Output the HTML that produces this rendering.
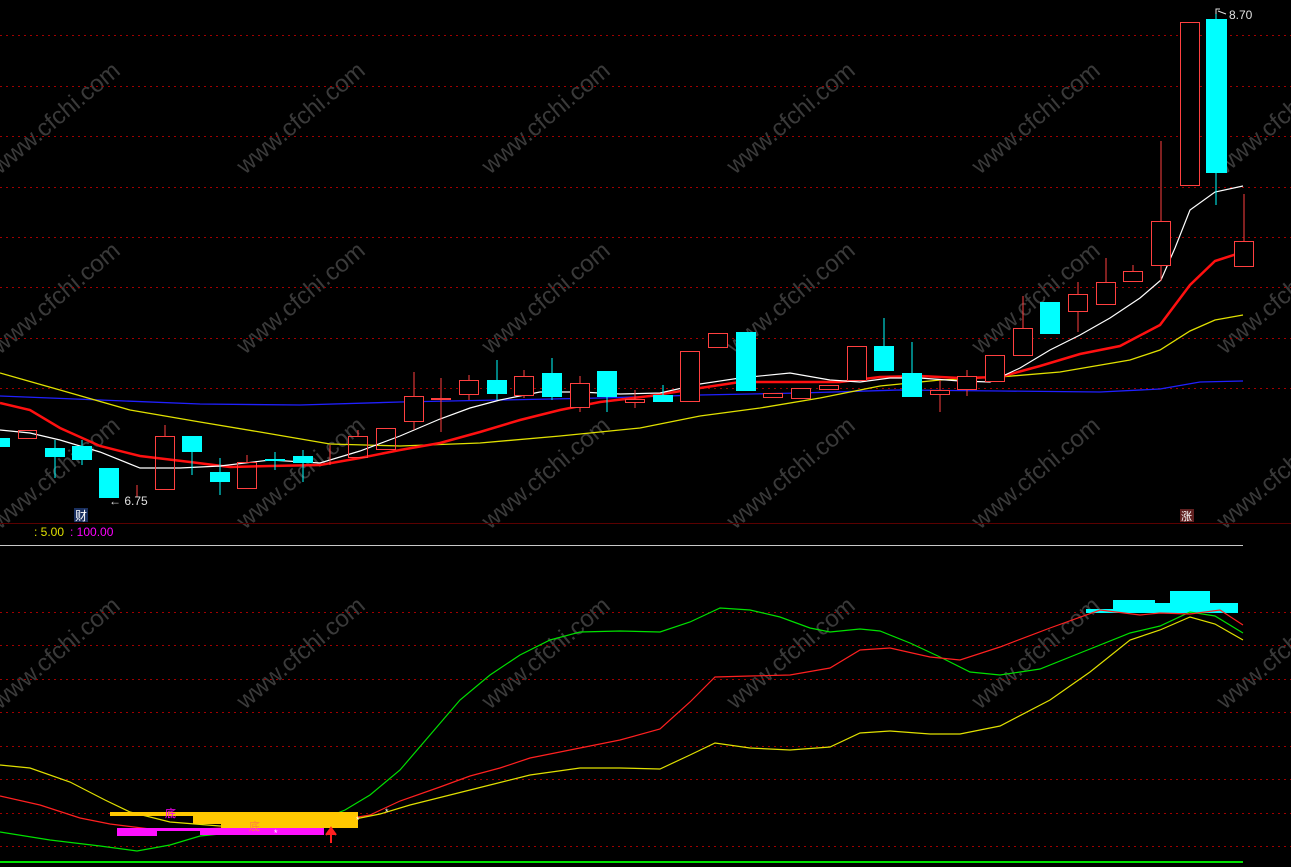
<!DOCTYPE html>
<html><head><meta charset="utf-8"><style>
html,body{margin:0;padding:0;background:#000;overflow:hidden}
svg{display:block}
text{font-family:"Liberation Sans","Noto Sans CJK SC",sans-serif}
.wm{fill:#3a3a3a;font-size:24px}
</style></head><body>
<svg width="1291" height="867" viewBox="0 0 1291 867" xmlns="http://www.w3.org/2000/svg">
<rect width="1291" height="867" fill="#000"/>
<!-- watermarks -->
<g class="wm">
<text transform="translate(0,175) rotate(-40)">www.cfchi.com</text>
<text transform="translate(245,175) rotate(-40)">www.cfchi.com</text>
<text transform="translate(490,175) rotate(-40)">www.cfchi.com</text>
<text transform="translate(735,175) rotate(-40)">www.cfchi.com</text>
<text transform="translate(980,175) rotate(-40)">www.cfchi.com</text>
<text transform="translate(1225,175) rotate(-40)">www.cfchi.com</text>
<text transform="translate(0,355) rotate(-40)">www.cfchi.com</text>
<text transform="translate(245,355) rotate(-40)">www.cfchi.com</text>
<text transform="translate(490,355) rotate(-40)">www.cfchi.com</text>
<text transform="translate(735,355) rotate(-40)">www.cfchi.com</text>
<text transform="translate(980,355) rotate(-40)">www.cfchi.com</text>
<text transform="translate(1225,355) rotate(-40)">www.cfchi.com</text>
<text transform="translate(0,530) rotate(-40)">www.cfchi.com</text>
<text transform="translate(245,530) rotate(-40)">www.cfchi.com</text>
<text transform="translate(490,530) rotate(-40)">www.cfchi.com</text>
<text transform="translate(735,530) rotate(-40)">www.cfchi.com</text>
<text transform="translate(980,530) rotate(-40)">www.cfchi.com</text>
<text transform="translate(1225,530) rotate(-40)">www.cfchi.com</text>
<text transform="translate(0,710) rotate(-40)">www.cfchi.com</text>
<text transform="translate(245,710) rotate(-40)">www.cfchi.com</text>
<text transform="translate(490,710) rotate(-40)">www.cfchi.com</text>
<text transform="translate(735,710) rotate(-40)">www.cfchi.com</text>
<text transform="translate(980,710) rotate(-40)">www.cfchi.com</text>
<text transform="translate(1225,710) rotate(-40)">www.cfchi.com</text>
</g>
<!-- grid -->
<g stroke="#a00000" stroke-width="1" stroke-dasharray="2,4">
<line x1="0" y1="35.5" x2="1291" y2="35.5"/>
<line x1="0" y1="86.5" x2="1291" y2="86.5"/>
<line x1="0" y1="136.5" x2="1291" y2="136.5"/>
<line x1="0" y1="187.5" x2="1291" y2="187.5"/>
<line x1="0" y1="237.5" x2="1291" y2="237.5"/>
<line x1="0" y1="287.5" x2="1291" y2="287.5"/>
<line x1="0" y1="338.5" x2="1291" y2="338.5"/>
<line x1="0" y1="388.5" x2="1291" y2="388.5"/>
<line x1="0" y1="612.5" x2="1291" y2="612.5"/>
<line x1="0" y1="645.5" x2="1291" y2="645.5"/>
<line x1="0" y1="679.5" x2="1291" y2="679.5"/>
<line x1="0" y1="712.5" x2="1291" y2="712.5"/>
<line x1="0" y1="746.5" x2="1291" y2="746.5"/>
<line x1="0" y1="779.5" x2="1291" y2="779.5"/>
<line x1="0" y1="813.5" x2="1291" y2="813.5"/>
<line x1="0" y1="846.5" x2="1291" y2="846.5"/>
</g>
<line x1="0" y1="523.5" x2="1291" y2="523.5" stroke="#5a0000"/>
<line x1="0" y1="545.5" x2="1243" y2="545.5" stroke="#c8c8c8"/>
<line x1="0" y1="862" x2="1243" y2="862" stroke="#00e000" stroke-width="2"/>

<!-- MA lines -->
<polyline fill="none" stroke="#2020ff" stroke-width="1.3" points="0,396 100,400 200,404 300,405 400,402 500,400 600,398 700,395 800,393 900,390 1000,391 1100,392 1160,389 1200,382 1243,381"/>
<polyline fill="none" stroke="#e0e000" stroke-width="1.3" points="0,373 60,390 130,410 200,422 260,432 330,444 400,446 480,443 560,436 640,428 700,416 760,408 820,398 880,386 940,380 1000,377 1060,372 1130,360 1160,350 1190,331 1215,320 1243,315"/>
<polyline fill="none" stroke="#ff1010" stroke-width="2.5" points="0,403 30,410 60,428 100,446 140,456 190,462 230,467 270,466 320,465 360,458 400,450 440,443 480,432 520,420 560,410 600,402 650,396 700,388 740,382 790,382 840,382 880,377 920,376 960,378 1000,377 1040,366 1080,354 1120,346 1160,325 1190,285 1215,261 1243,252"/>
<polyline fill="none" stroke="#ffffff" stroke-width="1.2" points="0,430 30,433 60,440 100,452 140,468 180,468 220,466 270,460 320,463 360,451 400,436 440,419 470,408 500,400 540,392 580,392 620,394 660,393 700,384 740,378 790,373 830,380 860,382 890,378 920,378 960,381 990,382 1020,368 1050,350 1080,335 1110,318 1140,298 1161,280 1175,248 1190,210 1215,192 1243,186"/>

<!-- candles -->
<g stroke-width="1">
<rect x="-7" y="438" width="17" height="9" fill="#00ffff"/>
<rect x="18.5" y="430.5" width="18" height="8" fill="none" stroke="#ff4040"/>
<line x1="55" y1="440" x2="55" y2="478" stroke="#00ffff"/><rect x="45" y="448" width="20" height="9" fill="#00ffff"/>
<line x1="82" y1="440" x2="82" y2="465" stroke="#00ffff"/><rect x="72" y="446" width="20" height="14" fill="#00ffff"/>
<rect x="99" y="468" width="20" height="30" fill="#00ffff"/>
<line x1="137" y1="485" x2="137" y2="497" stroke="#ff4040"/>
<line x1="165" y1="425" x2="165" y2="436" stroke="#ff4040"/><rect x="155.5" y="436.5" width="19" height="53" fill="none" stroke="#ff4040"/>
<line x1="192" y1="436" x2="192" y2="475" stroke="#00ffff"/><rect x="182" y="436" width="20" height="16" fill="#00ffff"/>
<line x1="220" y1="458" x2="220" y2="495" stroke="#00ffff"/><rect x="210" y="472" width="20" height="10" fill="#00ffff"/>
<line x1="247" y1="455" x2="247" y2="462" stroke="#ff4040"/><rect x="237.5" y="462.5" width="19" height="26" fill="none" stroke="#ff4040"/>
<line x1="275" y1="452" x2="275" y2="470" stroke="#00ffff"/><rect x="265" y="459" width="20" height="2" fill="#00ffff"/>
<line x1="303" y1="450" x2="303" y2="482" stroke="#00ffff"/><rect x="293" y="456" width="20" height="7" fill="#00ffff"/>
<line x1="330" y1="445" x2="330" y2="465" stroke="#ff4040"/>
<line x1="358" y1="430" x2="358" y2="436" stroke="#ff4040"/><rect x="348.5" y="436.5" width="19" height="21" fill="none" stroke="#ff4040"/>
<rect x="376.5" y="428.5" width="19" height="21" fill="none" stroke="#ff4040"/>
<line x1="414" y1="372" x2="414" y2="430" stroke="#ff4040"/><rect x="404.5" y="396.5" width="19" height="25" fill="#000" stroke="#ff4040"/>
<line x1="441" y1="378" x2="441" y2="432" stroke="#ff4040"/><rect x="431" y="398" width="20" height="2" fill="#ff4040"/>
<line x1="469" y1="375" x2="469" y2="400" stroke="#ff4040"/><rect x="459.5" y="380.5" width="19" height="14" fill="#000" stroke="#ff4040"/>
<line x1="497" y1="360" x2="497" y2="400" stroke="#00ffff"/><rect x="487" y="380" width="20" height="14" fill="#00ffff"/>
<line x1="524" y1="370" x2="524" y2="398" stroke="#ff4040"/><rect x="514.5" y="376.5" width="19" height="19" fill="#000" stroke="#ff4040"/>
<line x1="552" y1="358" x2="552" y2="400" stroke="#00ffff"/><rect x="542" y="373" width="20" height="24" fill="#00ffff"/>
<line x1="580" y1="376" x2="580" y2="412" stroke="#ff4040"/><rect x="570.5" y="383.5" width="19" height="24" fill="#000" stroke="#ff4040"/>
<line x1="607" y1="371" x2="607" y2="412" stroke="#00ffff"/><rect x="597" y="371" width="20" height="26" fill="#00ffff"/>
<line x1="635" y1="390" x2="635" y2="408" stroke="#ff4040"/><rect x="625.5" y="399.5" width="19" height="3" fill="#000" stroke="#ff4040"/>
<line x1="663" y1="385" x2="663" y2="402" stroke="#00ffff"/><rect x="653" y="395" width="20" height="7" fill="#00ffff"/>
<rect x="680.5" y="351.5" width="19" height="50" fill="#000" stroke="#ff4040"/>
<rect x="708.5" y="333.5" width="19" height="14" fill="#000" stroke="#ff4040"/>
<rect x="736" y="332" width="20" height="59" fill="#00ffff"/>
<rect x="763.5" y="393.5" width="19" height="4" fill="#000" stroke="#ff4040"/>
<rect x="791.5" y="388.5" width="19" height="10" fill="#000" stroke="#ff4040"/>
<rect x="819.5" y="385.5" width="19" height="4" fill="#000" stroke="#ff4040"/>
<rect x="847.5" y="346.5" width="19" height="34" fill="#000" stroke="#ff4040"/>
<line x1="884" y1="318" x2="884" y2="346" stroke="#00ffff"/><rect x="874" y="346" width="20" height="25" fill="#00ffff"/>
<line x1="912" y1="342" x2="912" y2="373" stroke="#00ffff"/><rect x="902" y="373" width="20" height="24" fill="#00ffff"/>
<line x1="940" y1="380" x2="940" y2="412" stroke="#ff4040"/><rect x="930.5" y="390.5" width="19" height="4" fill="#000" stroke="#ff4040"/>
<line x1="967" y1="370" x2="967" y2="396" stroke="#ff4040"/><rect x="957.5" y="376.5" width="19" height="13" fill="#000" stroke="#ff4040"/>
<rect x="985.5" y="355.5" width="19" height="26" fill="#000" stroke="#ff4040"/>
<line x1="1023" y1="296" x2="1023" y2="328" stroke="#ff4040"/><rect x="1013.5" y="328.5" width="19" height="27" fill="#000" stroke="#ff4040"/>
<rect x="1040" y="302" width="20" height="32" fill="#00ffff"/>
<line x1="1078" y1="282" x2="1078" y2="332" stroke="#ff4040"/><rect x="1068.5" y="294.5" width="19" height="17" fill="#000" stroke="#ff4040"/>
<line x1="1106" y1="258" x2="1106" y2="282" stroke="#ff4040"/><rect x="1096.5" y="282.5" width="19" height="22" fill="#000" stroke="#ff4040"/>
<line x1="1133" y1="265" x2="1133" y2="271" stroke="#ff4040"/><rect x="1123.5" y="271.5" width="19" height="10" fill="#000" stroke="#ff4040"/>
<line x1="1161" y1="141" x2="1161" y2="281" stroke="#ff4040"/><rect x="1151.5" y="221.5" width="19" height="44" fill="#000" stroke="#ff4040"/>
<rect x="1180.5" y="22.5" width="19" height="163" fill="#000" stroke="#ff4040"/>
<line x1="1216" y1="12" x2="1216" y2="205" stroke="#00ffff"/><rect x="1206" y="19" width="21" height="154" fill="#00ffff"/>
<line x1="1244" y1="194" x2="1244" y2="241" stroke="#ff4040"/><rect x="1234.5" y="241.5" width="19" height="25" fill="#000" stroke="#ff4040"/>
</g>
<text x="1229" y="19" fill="#e0e0e0" font-size="12">8.70</text>
<path d="M1216,14 L1216,9 L1220,9 M1218,11 L1226,14" stroke="#e0e0e0" fill="none"/>
<text x="109" y="505" fill="#e0e0e0" font-size="12">← 6.75</text>
<rect x="74" y="508" width="14" height="14" fill="#1a3060"/>
<text x="75" y="520" fill="#fff" font-size="12">财</text>
<rect x="1180" y="509" width="14" height="13" fill="#602020"/>
<text x="1181" y="520" fill="#fff" font-size="11">涨</text>
<text x="34" y="536" fill="#e0e000" font-size="12">: 5.00</text>
<text x="70" y="536" fill="#ff00ff" font-size="12">: 100.00</text>

<!-- lower indicator -->
<rect x="1086" y="609" width="152" height="4" fill="#00ffff"/>
<rect x="1113" y="600" width="42" height="13" fill="#00ffff"/>
<rect x="1155" y="603" width="15" height="10" fill="#00ffff"/>
<rect x="1170" y="591" width="40" height="22" fill="#00ffff"/>
<rect x="1210" y="603" width="28" height="10" fill="#00ffff"/>
<polyline fill="none" stroke="#00e000" stroke-width="1.2" points="0,832 50,840 100,846 137,851 170,845 200,836 240,832 280,828 320,820 345,810 370,795 400,770 430,735 460,700 490,675 520,655 550,640 580,632 620,631 660,632 690,622 720,608 750,610 780,617 810,628 830,632 860,629 880,631 910,643 940,657 970,672 1000,675 1040,669 1080,653 1130,633 1160,626 1190,612 1215,616 1243,633"/>
<polyline fill="none" stroke="#ff2020" stroke-width="1.2" points="0,796 40,805 80,818 110,824 150,829 200,829 250,827 300,822 340,820 370,815 400,801 440,787 470,776 500,768 530,758 570,750 620,740 660,729 690,702 715,677 750,676 790,675 830,668 860,650 890,648 930,657 960,660 1000,647 1050,628 1100,610 1140,615 1160,613 1190,614 1220,610 1243,625"/>
<polyline fill="none" stroke="#e0e000" stroke-width="1.2" points="0,765 30,768 70,782 105,800 130,812 170,822 220,826 270,826 310,824 350,820 380,814 410,805 450,795 490,785 530,775 580,768 620,768 660,769 690,755 715,743 750,748 790,750 830,747 860,733 890,731 930,734 960,734 1000,726 1050,700 1090,672 1130,640 1160,630 1190,617 1215,624 1243,640"/>
<rect x="110" y="812" width="248" height="4" fill="#ffc800"/>
<rect x="193" y="816" width="165" height="8" fill="#ffc800"/>
<rect x="221" y="824" width="137" height="4" fill="#ffc800"/>
<rect x="117" y="828" width="40" height="8" fill="#ff10ff"/>
<rect x="157" y="828" width="43" height="3" fill="#ff10ff"/>
<rect x="200" y="828" width="124" height="7" fill="#ff10ff"/>
<text x="165" y="817" fill="#ff00ff" font-size="11">底</text>
<text x="249" y="830" fill="#ff8040" font-size="11">底</text>
<path d="M331,843 L331,829 M326,835 L331,828 L336,835" stroke="#ff2020" stroke-width="2" fill="#ff2020"/>
<text x="274" y="836" fill="#fff" font-size="9">*</text>
<text x="356" y="823" fill="#fff" font-size="9">*</text>
<text x="385" y="815" fill="#fff" font-size="9">*</text>
</svg>
</body></html>
